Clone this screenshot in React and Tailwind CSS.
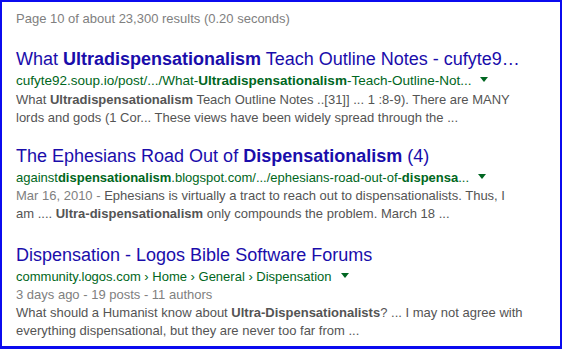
export default function App() {
  const tri = (
    <span className="ml-[9px] inline-block align-middle w-0 h-0 border-l-[4px] border-r-[4px] border-t-[5px] border-l-transparent border-r-transparent border-t-[#006621] relative top-[-2px]" />
  );
  return (
    <div
      className="w-[562px] h-[349px] bg-white border-[#0b0bef] border-l-2 border-t-2 border-r-2 border-b-[3px] box-border overflow-hidden pl-[14px] pt-[8px]"
      style={{ fontFamily: '"Liberation Sans", Arial, sans-serif' }}
    >
      <div className="text-[13px] leading-[18px] text-[#808080]">
        Page 10 of about 23,300 results (0.20 seconds)
      </div>

      <div className="mt-[20px]">
        <div className="text-[18px] leading-[23px] text-[#1a0dab] whitespace-nowrap">
          What <b>Ultradispensationalism</b> Teach Outline Notes - cufyte9…
        </div>
        <div className="text-[13.5px] leading-[20px] text-[#006621] whitespace-nowrap">
          cufyte92.soup.io/post/.../What-<b>Ultradispensationalism</b>-Teach-Outline-Not...{tri}
        </div>
        <div className="text-[13px] leading-[18px] text-[#545454] whitespace-nowrap">
          What <b>Ultradispensationalism</b> Teach Outline Notes ..[31]] ... 1 :8-9). There are MANY
          <br />
          lords and gods (1 Cor... These views have been widely spread through the ...
        </div>
      </div>

      <div className="mt-[18px]">
        <div className="text-[18px] leading-[23px] text-[#1a0dab] whitespace-nowrap">
          The Ephesians Road Out of <b>Dispensationalism</b> (4)
        </div>
        <div className="text-[13px] leading-[19px] text-[#006621] whitespace-nowrap">
          against<b>dispensationalism</b>.blogspot.com/.../ephesians-road-out-of-<b>dispensa</b>...{tri}
        </div>
        <div className="text-[13px] leading-[18px] text-[#545454] whitespace-nowrap">
          <span className="text-[#808080]">Mar 16, 2010 - </span>Ephesians is virtually a tract to reach out to dispensationalists. Thus, I
          <br />
          am .... <b>Ultra-dispensationalism</b> only compounds the problem. March 18 ...
        </div>
      </div>

      <div className="mt-[21px]">
        <div className="text-[18px] leading-[23px] text-[#1a0dab] whitespace-nowrap">
          Dispensation - Logos Bible Software Forums
        </div>
        <div className="text-[13px] leading-[19px] text-[#006621] whitespace-nowrap">
          community.logos.com › Home › General › Dispensation{tri}
        </div>
        <div className="text-[13px] leading-[18px] text-[#808080] whitespace-nowrap">
          3 days ago - 19 posts - 11 authors
        </div>
        <div className="text-[13px] leading-[18px] text-[#545454] whitespace-nowrap">
          What should a Humanist know about <b>Ultra-Dispensationalists</b>? ... I may not agree with
          <br />
          everything dispensational, but they are never too far from ...
        </div>
      </div>
    </div>
  );
}
